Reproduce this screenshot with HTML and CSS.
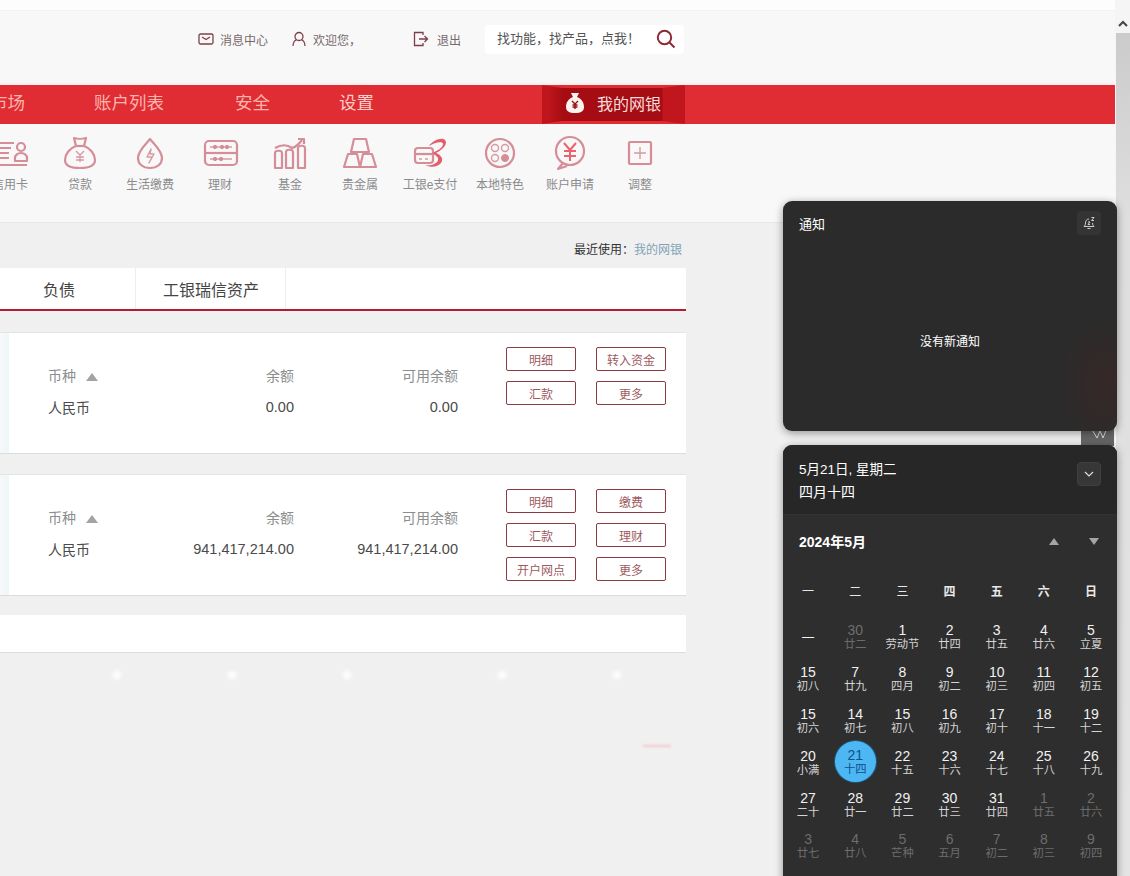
FILE: index.html
```html
<!DOCTYPE html>
<html lang="zh-CN">

<head>
    <meta charset="UTF-8">
    <title>我的网银</title>
    <link rel="stylesheet" href="styles.css">
</head>

<body>
    <div id="page">
        <div class="topStrip"></div>

        <div class="topBar">
            <a class="topLink msg">
                <svg width="16" height="12" viewBox="0 0 16 12"><rect x="1" y="1" width="14" height="10" rx="1.5"/><path d="M4 4l4 2.5L12 4"/></svg>
                消息中心
            </a>
            <a class="topLink user">
                <svg width="14" height="16" viewBox="0 0 14 16"><circle cx="7" cy="5.5" r="4"/><path d="M1 15c0-4 2-6 3.500-6M13 15c0-4-2-6-3.500-6"/></svg>
                欢迎您，
            </a>
            <a class="topLink quit">
                <svg width="16" height="16" viewBox="0 0 16 16"><path d="M10 4V1.500H1.500v13H10V12"/><path d="M6 8h8.500M11.500 5l3 3-3 3"/></svg>
                退出
            </a>
            <div class="search">
                <span>找功能，找产品，点我！</span>
                <svg width="20" height="20" viewBox="0 0 20 20"><circle cx="8.500" cy="8.500" r="6.700"/><path d="M13.500 13.500l5 5"/></svg>
            </div>
        </div>

        <div class="nav">
            <div class="navInner">
                <a class="navItem market">市场</a>
                <a class="navItem accounts">账户列表</a>
                <a class="navItem safe">安全</a>
                <a class="navItem settings">设置</a>
                <a class="navActive">
                    <svg width="20" height="22" viewBox="0 0 20 22"><path d="M6 1h8l-2 4c5 2 7 6 7 10 0 4-3 6-9 6s-9-2-9-6c0-4 2-8 7-10z" fill="#fdf3ee"/><path d="M7 9l3 3 3-3M10 12v5M7.500 13h5M7.500 15h5" stroke="#8f1418" stroke-width="1.400" fill="none"/></svg>
                    我的网银
                </a>
            </div>
        </div>

        <div class="iconBar">
            <a class="shortcut first">
                <svg viewBox="0 0 32 32"><path d="M0 6h20M0 11h17M0 16h15M0 21h15M0 28h33"/><circle cx="27" cy="10" r="4"/><path d="M21 24v-3c0-3 3-5 6-5s6 2 6 5v3z"/></svg>
                <span>信用卡</span>
            </a>
            <a class="shortcut">
                <svg viewBox="0 0 32 32"><path d="M10 1c3 1 9 1 12 0l-2 8c6 2 11 8 11 14 0 6-6 8-15 8S1 29 1 23C1 17 6 11 12 9z"/><path d="M12 9h8"/><path class="thin" d="M12 14l4 4 4-4M16 18v7M12 20h8M12 23h8"/></svg>
                <span>贷款</span>
            </a>
            <a class="shortcut">
                <svg viewBox="0 0 32 32"><path d="M16 2c4 5 12 12 12 19 0 6-5 10-12 10S4 27 4 21C4 14 12 7 16 2z"/><path class="thin" d="M17 12l-4 8h5l-3 6 5-9h-4z"/></svg>
                <span>生活缴费</span>
            </a>
            <a class="shortcut">
                <svg viewBox="0 0 32 32"><rect x="1" y="4" width="32" height="24" rx="4"/><path d="M1 16h32"/><path class="thin" d="M6 10h22M6 22h22"/><circle class="dot" cx="11" cy="10" r="1.700"/><circle class="dot" cx="18" cy="10" r="1.700"/><circle class="dot" cx="23" cy="10" r="1.700"/><circle class="dot" cx="11" cy="22" r="1.700"/><circle class="dot" cx="17" cy="22" r="1.700"/></svg>
                <span>理财</span>
            </a>
            <a class="shortcut">
                <svg viewBox="0 0 32 32"><path d="M1 31V16c0-3 7-3 7 0v15zM12 31V15c0-3 7-3 7 0v16zM24 31V11c0-3 7-3 7 0v20z"/><path d="M1 11c7-4 13-3 17 0 4-1 7-4 10-8M24 2h6v5"/></svg>
                <span>基金</span>
            </a>
            <a class="shortcut">
                <svg viewBox="0 0 32 32"><path d="M10 2h12l3 13H7zM4 17h9l3 13H0zM19 17h9l4 13H16z"/></svg>
                <span>贵金属</span>
            </a>
            <a class="shortcut">
                <svg viewBox="0 0 32 32"><rect x="1" y="11" width="18" height="15" rx="3"/><path d="M1 17h18"/><path class="thin" d="M5 22h3M11 22h3"/><path class="swoosh" d="M15 9C19 3 28 0 31 3c3 3-1 9-9 13 5 2 8 6 5 10-3 4-10 5-16 2 6 1 12-1 13-5 1-3-3-5-6-7 5-2 11-5 11-9 0-3-8-2-14 2z"/></svg>
                <span>工银e支付</span>
            </a>
            <a class="shortcut">
                <svg viewBox="0 0 32 32"><circle cx="16" cy="16" r="14"/><circle class="thin" cx="11" cy="11" r="3.500"/><circle class="thin" cx="21" cy="11" r="3.500"/><circle class="thin" cx="11" cy="21" r="3.500"/><circle class="dot" cx="21" cy="21" r="3.500"/></svg>
                <span>本地特色</span>
            </a>
            <a class="shortcut">
                <svg viewBox="0 0 32 32"><circle cx="16" cy="14" r="14"/><path d="M9 26l-5 6 9-3"/><path class="red" d="M10 6l6 7 6-7M16 13v11M10 14h12M10 19h12"/></svg>
                <span>账户申请</span>
            </a>
            <a class="shortcut">
                <svg viewBox="0 0 32 32"><rect x="5" y="5" width="22" height="22" rx="1"/><path class="thin" d="M16 10v12M10 16h12"/></svg>
                <span>调整</span>
            </a>
        </div>

        <div class="content">
            <div class="recent">最近使用：<a>我的网银</a></div>

            <div class="tabs">
                <a class="tab first">负债</a>
                <a class="tab">工银瑞信资产</a>
            </div>

            <div class="card cardOne">
                <table class="money">
                    <tr>
                        <th class="cur">币种 <i class="sortUp"></i></th>
                        <th>余额</th>
                        <th>可用余额</th>
                    </tr>
                    <tr>
                        <td class="cur">人民币</td>
                        <td>0.00</td>
                        <td>0.00</td>
                    </tr>
                </table>
                <div class="btns">
                    <button>明细</button>
                    <button>转入资金</button>
                    <button>汇款</button>
                    <button>更多</button>
                </div>
            </div>

            <div class="card cardTwo">
                <table class="money">
                    <tr>
                        <th class="cur">币种 <i class="sortUp"></i></th>
                        <th>余额</th>
                        <th>可用余额</th>
                    </tr>
                    <tr>
                        <td class="cur">人民币</td>
                        <td>941,417,214.00</td>
                        <td>941,417,214.00</td>
                    </tr>
                </table>
                <div class="btns">
                    <button>明细</button>
                    <button>缴费</button>
                    <button>汇款</button>
                    <button>理财</button>
                    <button>开户网点</button>
                    <button>更多</button>
                </div>
            </div>

            <div class="card cardEmpty"></div>

            <!-- faint light dots under the last card -->
            <div class="glints">
                <i></i><i></i><i></i><i></i><i></i>
            </div>
            <div class="smudge"></div>
        </div>
    </div>

    <div class="scrollbar">
        <div class="scrollUp">
            <svg width="10" height="8" viewBox="0 0 10 8"><path d="M1 6l4-4 4 4"/></svg>
        </div>
        <div class="thumb"></div>
    </div>

    <!-- system flyouts on top of the browser window -->
    <div class="stray">
        <svg width="20" height="14" viewBox="0 0 20 14"><path d="M2 2l6 10 3-7 3 7 4-10"/></svg>
    </div>

    <div class="flyout notice">
        <div class="noticeHead">
            <span>通知</span>
            <div class="snooze">
                <svg width="14" height="14" viewBox="0 0 14 14"><path d="M7 3C4.500 3 3.500 5 3.500 7c0 2-1 3-1.500 3.500h10C11.500 10 10.500 9 10.500 7M5.500 12.500h3"/><path d="M6 6h2L6 8.500h2M9.500 1.500h2.500l-2.500 3H12"/></svg>
            </div>
        </div>
        <div class="noticeEmpty">没有新通知</div>
        <div class="noticeTint"></div>
    </div>

    <div class="flyout calendar">
        <div class="calHead">
            <div>
                <div class="calDate">5月21日, 星期二</div>
                <div class="calLunar">四月十四</div>
            </div>
            <div class="collapse">
                <svg width="10" height="6" viewBox="0 0 10 6"><path d="M1 1l4 4 4-4"/></svg>
            </div>
        </div>
        <div class="calMonth">
            <span>2024年5月</span>
            <div class="arrows"><i class="arrowUp"></i><i class="arrowDown"></i></div>
        </div>
        <div class="weekdays">
            <span>一</span><span>二</span><span>三</span><b>四</b><b>五</b><b>六</b><b>日</b>
        </div>
        <div class="days">
            <div class="day"><b class="dash">—</b></div>
            <div class="day off"><b>30</b><small>廿二</small></div>
            <div class="day"><b>1</b><small>劳动节</small></div>
            <div class="day"><b>2</b><small>廿四</small></div>
            <div class="day"><b>3</b><small>廿五</small></div>
            <div class="day"><b>4</b><small>廿六</small></div>
            <div class="day"><b>5</b><small>立夏</small></div>

            <div class="day"><b>15</b><small>初八</small></div>
            <div class="day"><b>7</b><small>廿九</small></div>
            <div class="day"><b>8</b><small>四月</small></div>
            <div class="day"><b>9</b><small>初二</small></div>
            <div class="day"><b>10</b><small>初三</small></div>
            <div class="day"><b>11</b><small>初四</small></div>
            <div class="day"><b>12</b><small>初五</small></div>

            <div class="day"><b>15</b><small>初六</small></div>
            <div class="day"><b>14</b><small>初七</small></div>
            <div class="day"><b>15</b><small>初八</small></div>
            <div class="day"><b>16</b><small>初九</small></div>
            <div class="day"><b>17</b><small>初十</small></div>
            <div class="day"><b>18</b><small>十一</small></div>
            <div class="day"><b>19</b><small>十二</small></div>

            <div class="day"><b>20</b><small>小满</small></div>
            <div class="day today"><b>21</b><small>十四</small></div>
            <div class="day"><b>22</b><small>十五</small></div>
            <div class="day"><b>23</b><small>十六</small></div>
            <div class="day"><b>24</b><small>十七</small></div>
            <div class="day"><b>25</b><small>十八</small></div>
            <div class="day"><b>26</b><small>十九</small></div>

            <div class="day"><b>27</b><small>二十</small></div>
            <div class="day"><b>28</b><small>廿一</small></div>
            <div class="day"><b>29</b><small>廿二</small></div>
            <div class="day"><b>30</b><small>廿三</small></div>
            <div class="day"><b>31</b><small>廿四</small></div>
            <div class="day off"><b>1</b><small>廿五</small></div>
            <div class="day off"><b>2</b><small>廿六</small></div>

            <div class="day off"><b>3</b><small>廿七</small></div>
            <div class="day off"><b>4</b><small>廿八</small></div>
            <div class="day off"><b>5</b><small>芒种</small></div>
            <div class="day off"><b>6</b><small>五月</small></div>
            <div class="day off"><b>7</b><small>初二</small></div>
            <div class="day off"><b>8</b><small>初三</small></div>
            <div class="day off"><b>9</b><small>初四</small></div>
        </div>
    </div>
</body>

</html>
```

FILE: styles.css
```css
html, body {
    margin: 0;
    height: 876px;
    overflow: hidden;
}

body {
    position: relative;
    display: flex;
    background-color: #f0f0f1;
    color: #444;
    font-family: "Liberation Sans", "Noto Sans CJK SC", sans-serif;
}

a {
    text-decoration: none;
}

#page {
    width: 1115px;
    height: 876px;
    flex-shrink: 0;
    overflow: hidden;
}

.topStrip {
    height: 11px;
    background-color: #fdfdfd;
    border-bottom: 1px solid #f3f3f4;
    box-sizing: border-box;
}

/* top links and search */
.topBar {
    display: flex;
    align-items: center;
    height: 74px;
    padding-left: 198px;
    padding-bottom: 18px;
    box-sizing: border-box;
    background-color: #f8f8f9;
    font-size: 12px;
    color: #77686a;
}

.topLink {
    display: flex;
    align-items: center;
    gap: 6px;
}

.topLink svg {
    fill: none;
    stroke: #7d3f47;
    stroke-width: 1.300;
}

.msg {
    width: 94px;
}

.user {
    width: 121px;
    gap: 7px;
}

.quit {
    width: 72px;
    gap: 8px;
}

.search {
    display: flex;
    align-items: center;
    justify-content: space-between;
    width: 199px;
    height: 29px;
    padding: 0 8px 0 12px;
    box-sizing: border-box;
    background-color: #fff;
    color: #555;
    font-size: 13px;
    border-radius: 4px;
}

.search span {
    position: relative;
    top: -2px;
}

.search svg {
    fill: none;
    stroke: #8d2a33;
    stroke-width: 2;
}

/* red menu */
.nav {
    height: 39px;
    background-color: #e02c33;
    box-shadow: 0 0 4px #fbdcdc;
}

.navInner {
    position: relative;
    display: flex;
    height: 39px;
}

.navItem {
    line-height: 37px;
    font-size: 17.500px;
    color: #fbb5ae;
}

.market {
    margin-left: -10px;
    width: 104px;
}

.accounts {
    width: 141px;
}

.safe {
    width: 104px;
}

.settings {
    width: 203px;
    color: #fcd0cb;
}

.navActive {
    display: flex;
    align-items: center;
    gap: 12px;
    width: 143px;
    height: 39px;
    padding-left: 23px;
    padding-bottom: 3px;
    box-sizing: border-box;
    font-size: 16px;
    color: #f7dcdc;
    background: linear-gradient(90deg, #bf151c 0, #bf151c 7px, #a50c13 22px, #a50c13 120px, #c1161d 121px, #c1161d 100%);
    clip-path: polygon(0 0, 20px 3px, 120px 3px, 143px 0, 143px 100%, 120px 36px, 20px 36px, 0 100%);
}

/* shortcut icons */
.iconBar {
    display: flex;
    height: 99px;
    background-color: #f8f8f9;
    border-bottom: 1px solid #e6e6e7;
    box-sizing: border-box;
}

.shortcut {
    display: flex;
    flex-direction: column;
    align-items: center;
    width: 70px;
    padding-top: 13px;
    font-size: 12px;
    color: #8b8b8b;
}

.shortcut.first {
    margin-left: -25px;
}

.shortcut svg {
    width: 32px;
    height: 32px;
    overflow: visible;
    fill: none;
    stroke: #d58e97;
    stroke-width: 2.200;
    stroke-linejoin: round;
}

.shortcut svg .thin {
    stroke-width: 1.400;
    stroke: #d89aa2;
}

.shortcut svg .dot {
    fill: #d58e97;
    stroke-width: 1;
}

.shortcut svg .red {
    stroke: #e8636e;
    stroke-width: 2;
}

.shortcut svg .swoosh {
    fill: #e0606c;
    stroke: none;
}

.shortcut span {
    margin-top: 6px;
    white-space: nowrap;
}

/* account cards */
.content {
    width: 686px;
}

.recent {
    height: 45px;
    padding-top: 17px;
    padding-right: 4px;
    box-sizing: border-box;
    text-align: right;
    font-size: 12px;
    color: #333;
}

.recent a {
    color: #7fa3b5;
}

.tabs {
    display: flex;
    height: 43px;
    background-color: #fff;
    border-bottom: 2px solid #b21e30;
    box-sizing: border-box;
}

.tab {
    display: flex;
    align-items: center;
    justify-content: center;
    padding: 0 26px 0 27px;
    font-size: 16px;
    color: #444;
    border-right: 1px solid #eee;
}

.tab.first {
    width: 136px;
    padding: 0 60px 0 0;
    box-sizing: border-box;
    justify-content: flex-end;
}

.card {
    position: relative;
    background-color: #fff;
    border-top: 1px solid #e4e4e5;
    border-bottom: 1px solid #dcdcdd;
    box-sizing: border-box;
}

.card::before {
    content: "";
    position: absolute;
    left: 0;
    top: 0;
    bottom: 0;
    width: 9px;
    background: linear-gradient(90deg, #f6f9fa, #eef6f9);
}

.cardOne {
    height: 122px;
    margin-top: 21px;
}

.cardTwo {
    height: 122px;
    margin-top: 20px;
}

.cardEmpty {
    height: 38px;
    margin-top: 19px;
    border-top: none;
}

.cardEmpty::before {
    display: none;
}

.glints {
    display: flex;
    height: 10px;
    margin-top: 18px;
    padding-left: 113px;
}

.glints i {
    flex-shrink: 0;
    width: 8px;
    height: 8px;
    margin-right: 107px;
    border-radius: 50%;
    background-color: #fff;
    filter: blur(2px);
}

.glints i:nth-child(3) {
    margin-right: 147px;
}

.glints i:last-child {
    margin-right: 0;
}

.smudge {
    width: 28px;
    height: 2px;
    margin: 64px 0 0 643px;
    background-color: #f5c6cc;
    filter: blur(1px);
}

.money {
    position: absolute;
    left: 48px;
    top: 25px;
    width: 410px;
    border-collapse: collapse;
    font-size: 14.500px;
}

.money th {
    height: 34px;
    padding: 0;
    font-weight: normal;
    font-size: 14px;
    color: #8d8d8d;
    text-align: right;
}

.money td {
    height: 30px;
    padding: 0;
    text-align: right;
    color: #4a4a4a;
}

.money .cur {
    width: 120px;
    text-align: left;
}

.money td.cur {
    font-size: 14px;
}

.money tr > :nth-child(2) {
    width: 126px;
}

.sortUp {
    display: inline-block;
    margin-left: 6px;
    border-left: 6.500px solid transparent;
    border-right: 6.500px solid transparent;
    border-bottom: 8px solid #a3a3a3;
}

.btns {
    position: absolute;
    right: 20px;
    top: 14px;
    display: grid;
    grid-template-columns: 70px 70px;
    grid-auto-rows: 24px;
    column-gap: 20px;
    row-gap: 10px;
}

button {
    padding: 0;
    background-color: #fff;
    border: 1px solid #8a3a42;
    border-radius: 2px;
    font-family: inherit;
    font-size: 12px;
    color: #9d5a5f;
}

/* windows scrollbar */
.scrollbar {
    flex: 1;
    display: flex;
    flex-direction: column;
    background-color: #f5f5f5;
}

.scrollUp {
    height: 33px;
    padding-top: 14px;
    box-sizing: border-box;
    text-align: center;
}

.scrollUp svg {
    fill: none;
    stroke: #444;
    stroke-width: 2;
}

.thumb {
    flex: 1;
    margin-left: 1px;
    background: linear-gradient(180deg, #cbcbcb, #dedede 180px, #e4e4e4);
}

/* windows flyouts */
.flyout {
    position: absolute;
    left: 783px;
    width: 334px;
    box-sizing: border-box;
    background-color: #2b2b2b;
    color: #fff;
    border-radius: 9px;
    box-shadow: 0 2px 8px rgba(0, 0, 0, 0.4);
}

.stray {
    position: absolute;
    left: 1081px;
    top: 420px;
    width: 33px;
    height: 26px;
    padding: 6px 0 0 8px;
    box-sizing: border-box;
    background-color: #666;
}

.stray svg {
    fill: none;
    stroke: #ddd;
    stroke-width: 1;
}

.notice {
    top: 201px;
    height: 230px;
    overflow: hidden;
}

.noticeHead {
    display: flex;
    align-items: center;
    justify-content: space-between;
    padding: 10px 16px 0;
    font-size: 13px;
}

.snooze {
    display: flex;
    align-items: center;
    justify-content: center;
    width: 24px;
    height: 24px;
    border-radius: 4px;
    background-color: #343434;
}

.snooze svg {
    fill: none;
    stroke: #ccc;
    stroke-width: 1;
}

.noticeEmpty {
    margin-top: 97px;
    text-align: center;
    font-size: 12px;
}

.noticeTint {
    position: absolute;
    right: 0;
    bottom: 0;
    width: 60px;
    height: 120px;
    background: radial-gradient(ellipse at 80% 60%, rgba(90, 30, 30, 0.25), rgba(43, 43, 43, 0) 70%);
}

.calendar {
    top: 445px;
    height: 460px;
    padding: 0 1.500px;
    background-color: #2e2e2e;
}

.calHead {
    display: flex;
    justify-content: space-between;
    height: 70px;
    margin: 0 -1.500px;
    padding: 14px 16px 0;
    box-sizing: border-box;
    background-color: #272727;
    border-bottom: 1px solid #333;
    border-radius: 9px 9px 0 0;
    font-size: 13.500px;
}

.calDate {
    line-height: 22px;
}

.calLunar {
    line-height: 22px;
    font-size: 14px;
}

.collapse {
    display: flex;
    align-items: center;
    justify-content: center;
    width: 24px;
    height: 24px;
    margin-top: 3px;
    background-color: #373737;
    border: 1px solid #404040;
    border-radius: 4px;
    box-sizing: border-box;
}

.collapse svg {
    fill: none;
    stroke: #ddd;
    stroke-width: 1.200;
}

.calMonth {
    display: flex;
    justify-content: space-between;
    align-items: center;
    height: 52px;
    padding: 0 17px 0 14.500px;
    font-size: 14px;
    font-weight: bold;
}

.arrows {
    display: flex;
    gap: 30px;
}

.arrowUp {
    border-left: 5px solid transparent;
    border-right: 5px solid transparent;
    border-bottom: 7px solid #a5a5a5;
}

.arrowDown {
    border-left: 5px solid transparent;
    border-right: 5px solid transparent;
    border-top: 7px solid #a5a5a5;
}

.weekdays {
    display: grid;
    grid-template-columns: repeat(7, 47.170px);
    height: 46px;
    margin-bottom: 2px;
    align-items: center;
    text-align: center;
    font-size: 12px;
    color: #e8e8e8;
}

.days {
    display: grid;
    grid-template-columns: repeat(7, 47.170px);
    grid-auto-rows: 41.900px;
}

.day {
    display: flex;
    flex-direction: column;
    align-items: center;
    justify-content: center;
    padding-top: 2px;
    box-sizing: border-box;
    color: #f2f2f2;
}

.day b {
    font-weight: normal;
    font-size: 14px;
    line-height: 14px;
}

.day small {
    font-size: 11.300px;
    line-height: 14px;
    color: #d5d5d5;
}

.day .dash {
    font-size: 12px;
}

.day.off b,
.day.off small {
    color: #6d6d6d;
}

.day.today {
    width: 41px;
    height: 41px;
    justify-self: center;
    border-radius: 50%;
    background-color: #4cb7f2;
    box-shadow: 0 0 0 1px #1e5a7e;
}

.day.today b,
.day.today small {
    color: #0f4f8a;
}
```
